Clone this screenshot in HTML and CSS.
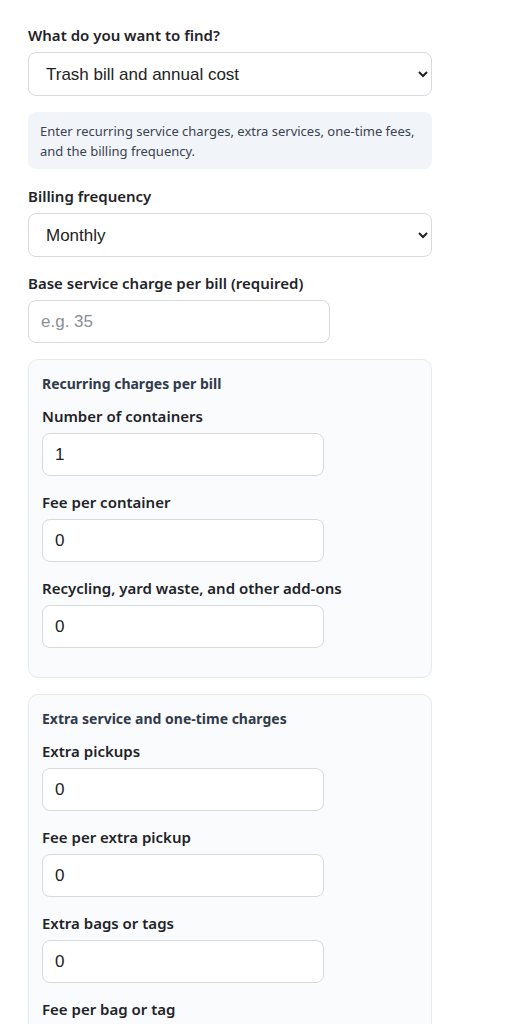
FILE: index.html
```html
<!DOCTYPE html>
<html lang="en">
<head>
  <meta charset="UTF-8">
  <meta name="viewport" content="width=device-width, initial-scale=1.0">
  <title>Trash Bill Calculator</title>
  <link rel="stylesheet" href="styles.css">
</head>
<body>
  <form class="calc">
    <div class="field">
      <label class="label" for="goal">What do you want to find?</label>
      <select class="control" id="goal">
        <option>Trash bill and annual cost</option>
        <option>Cost per pickup</option>
      </select>
    </div>

    <p class="hint">Enter recurring service charges, extra services, one-time fees, and the billing frequency.</p>

    <div class="field">
      <label class="label" for="freq">Billing frequency</label>
      <select class="control" id="freq">
        <option>Monthly</option>
        <option>Quarterly</option>
        <option>Annually</option>
      </select>
    </div>

    <div class="field">
      <label class="label" for="base">Base service charge per bill (required)</label>
      <input class="control short" id="base" type="text" placeholder="e.g. 35">
    </div>

    <div class="group">
      <div class="group-title">Recurring charges per bill</div>
      <div class="field">
        <label class="label" for="containers">Number of containers</label>
        <input class="control short" id="containers" type="text" value="1">
      </div>
      <div class="field">
        <label class="label" for="container-fee">Fee per container</label>
        <input class="control short" id="container-fee" type="text" value="0">
      </div>
      <div class="field">
        <label class="label" for="addons">Recycling, yard waste, and other add-ons</label>
        <input class="control short" id="addons" type="text" value="0">
      </div>
    </div>

    <div class="group">
      <div class="group-title">Extra service and one-time charges</div>
      <div class="field">
        <label class="label" for="pickups">Extra pickups</label>
        <input class="control short" id="pickups" type="text" value="0">
      </div>
      <div class="field">
        <label class="label" for="pickup-fee">Fee per extra pickup</label>
        <input class="control short" id="pickup-fee" type="text" value="0">
      </div>
      <div class="field">
        <label class="label" for="bags">Extra bags or tags</label>
        <input class="control short" id="bags" type="text" value="0">
      </div>
      <div class="field">
        <label class="label" for="bag-fee">Fee per bag or tag</label>
        <input class="control short" id="bag-fee" type="text" value="0">
      </div>
    </div>
  </form>
</body>
</html>
```

FILE: styles.css
```css
body {
  margin: 0;
  padding: 0;
  background: #ffffff;
  font-family: "Noto Sans", "Open Sans", sans-serif;
  color: #1f2328;
}

.calc {
  width: 404px;
  padding: 25px 28px;
  display: flex;
  flex-direction: column;
}

.field {
  display: flex;
  flex-direction: column;
  margin-bottom: 16px;
}

.label {
  font-size: 15px;
  font-weight: 600;
  line-height: 20px;
  margin-bottom: 7px;
}

.control {
  box-sizing: border-box;
  height: 44px;
  padding: 0 13px;
  border: 1px solid #d6d9de;
  border-radius: 8px;
  background: #ffffff;
  font-family: "Liberation Sans", Arial, sans-serif;
  font-size: 17px;
  color: #222;
}

.control::placeholder {
  color: #8a8f96;
}

input.control {
  height: 43px;
  padding: 0 12px;
}

.short {
  width: 302px;
}

.hint {
  margin: 0 0 17px;
  padding: 9px 12px 8px;
  background: #f1f5f9;
  border-radius: 8px;
  font-size: 13px;
  line-height: 20px;
  color: #3b4350;
}

.group {
  margin: 0 0 16px;
  padding: 14px 13px;
  border: 1px solid #e6e9ee;
  border-radius: 10px;
  background: #f9fbfd;
}

.group .short {
  width: 282px;
}

.group .field:last-child {
  margin-bottom: 15px;
}

.group-title {
  font-size: 14px;
  font-weight: 700;
  line-height: 20px;
  color: #313a4a;
  margin-bottom: 12px;
}
```
